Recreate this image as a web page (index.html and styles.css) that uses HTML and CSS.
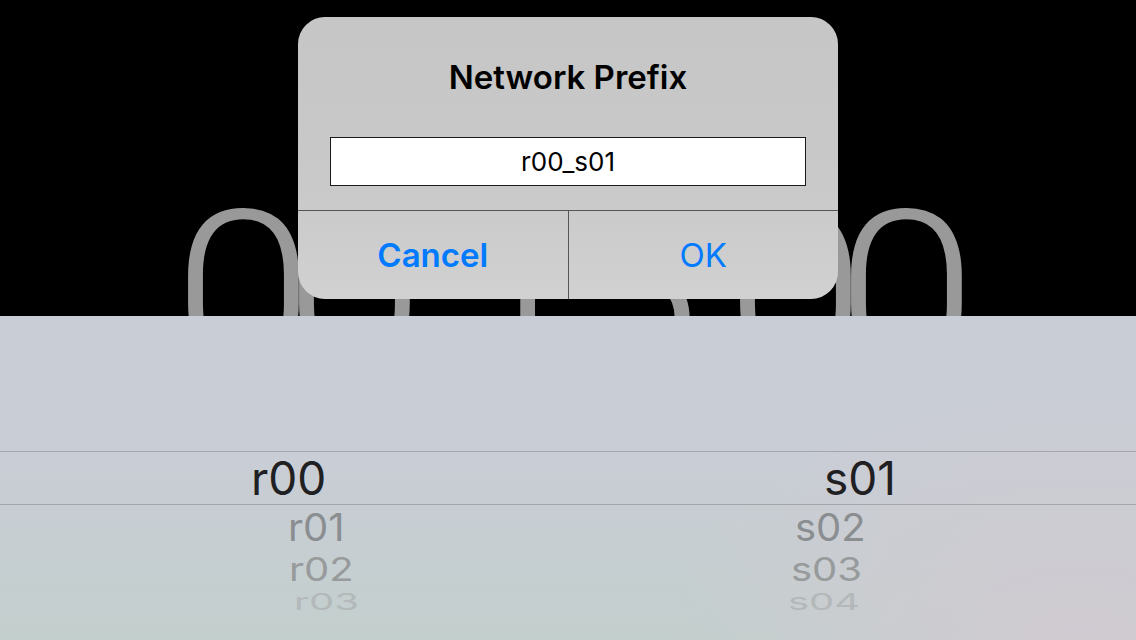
FILE: index.html
```html
<!DOCTYPE html>
<html>
<head>
<meta charset="utf-8">
<link rel="stylesheet" href="styles.css">
</head>
<body>
<div class="screen">
  <div class="stage">
    <div class="clock">
      <span class="d">0</span><span class="d">0</span><span class="c">:</span><span class="d">1</span><span class="d">5</span><span class="c">:</span><span class="d">0</span><span class="d">0</span>
    </div>
  </div>
  <div class="picker">
    <div class="spacer"></div>
    <div class="row selected">
      <span class="cell l0">r00</span>
      <span class="cell s0">s01</span>
    </div>
    <div class="row row1">
      <span class="cell l1">r01</span>
      <span class="cell s1">s02</span>
    </div>
    <div class="row row2">
      <span class="cell l2">r02</span>
      <span class="cell s2">s03</span>
    </div>
    <div class="row row3">
      <span class="cell l3">r03</span>
      <span class="cell s3">s04</span>
    </div>
  </div>
  <div class="alert">
    <div class="alert-title">Network Prefix</div>
    <div class="alert-field">r00_s01</div>
    <div class="alert-actions">
      <div class="btn btn-cancel">Cancel</div>
      <div class="btn btn-ok">OK</div>
    </div>
  </div>
</div>
</body>
</html>
```
FILE: styles.css
```css
html, body {
  margin: 0;
  padding: 0;
  background: #000;
}
.screen {
  position: relative;
  width: 1136px;
  height: 640px;
  overflow: hidden;
  display: flex;
  flex-direction: column;
  font-family: "Inter", "Roboto", sans-serif;
}
.stage {
  height: 316px;
  flex: none;
  background: #000;
}
.clock {
  margin-top: 182px;
  display: flex;
  justify-content: center;
  font-family: "Roboto", sans-serif;
  font-weight: 300;
  font-size: 222px;
  line-height: 222px;
  color: #999999;
}
.clock .d {
  width: 111px;
  text-align: center;
  transform: scaleX(1.14);
}
.clock .c {
  width: 54px;
  text-align: center;
}
.picker {
  position: relative;
  z-index: 1;
  flex: 1;
  display: flex;
  flex-direction: column;
  background:
    radial-gradient(ellipse 420px 260px at 1080px 330px, rgba(210, 202, 210, 0.9), rgba(210, 202, 210, 0) 100%),
    linear-gradient(180deg, #c9cdd5 0%, #c9cdd5 45%, #c3cfcd 100%);
}
.spacer {
  height: 135px;
  flex: none;
}
.row {
  display: grid;
  grid-template-columns: 568px 568px;
  align-items: center;
  flex: none;
  white-space: nowrap;
}
.cell {
  display: block;
}
.selected {
  height: 52px;
  border-top: 1px solid #a3a5a9;
  border-bottom: 1px solid #a3a5a9;
  font-size: 46px;
  line-height: 52px;
  color: #202022;
}
.l0 { padding-left: 251px; }
.s0 { padding-left: 256px; }
.row1 {
  height: 46px;
  font-size: 40px;
  line-height: 46px;
  color: #8a8e91;
}
.row1 .cell { transform: scaleY(0.95); }
.l1 { padding-left: 288px; }
.s1 { padding-left: 227px; }
.row2 {
  height: 38px;
  font-size: 40px;
  line-height: 38px;
  color: #979b9c;
}
.row2 .cell { transform: scaleY(0.8); }
.l2 { padding-left: 289px; }
.s2 { padding-left: 223px; }
.row3 {
  height: 26px;
  font-size: 40px;
  line-height: 26px;
  color: #b3b8b9;
}
.row3 .cell { transform: scaleY(0.57); }
.l3 { padding-left: 294px; }
.s3 { padding-left: 220px; }

.alert {
  position: absolute;
  left: 298px;
  top: 17px;
  width: 540px;
  height: 282px;
  border-radius: 27px;
  overflow: hidden;
  z-index: 2;
  display: flex;
  flex-direction: column;
  background: linear-gradient(180deg, #c6c6c6 0%, #c9c9c9 60%, #d1d1d1 100%);
}
.alert-title {
  padding-top: 40px;
  height: 40px;
  line-height: 40px;
  text-align: center;
  font-size: 33px;
  font-weight: 600;
  color: #000;
}
.alert-field {
  margin: 40px 32px 0;
  height: 47px;
  border: 1px solid #1a1a1a;
  background: #fff;
  text-align: center;
  line-height: 47px;
  font-size: 26px;
  color: #000;
}
.alert-actions {
  margin-top: 24px;
  flex: 1;
  display: flex;
  border-top: 1px solid #555555;
}
.btn {
  flex: 1;
  display: flex;
  align-items: center;
  justify-content: center;
  font-size: 33px;
  color: #007aff;
}
.btn-cancel {
  font-weight: 600;
}
.btn-ok {
  border-left: 1px solid #555555;
}
```
